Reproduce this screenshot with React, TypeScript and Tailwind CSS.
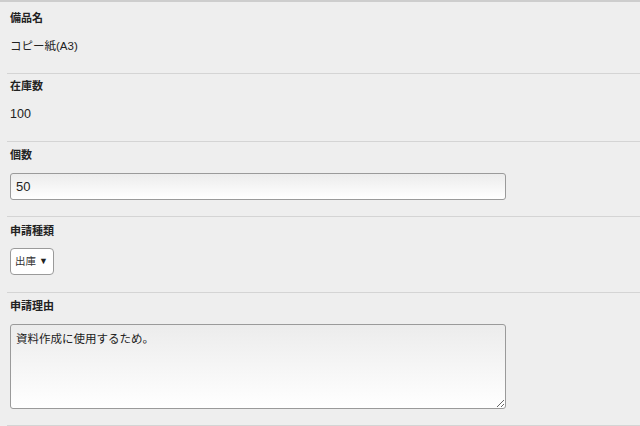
import { useState } from 'react';

const font = { fontFamily: '"Liberation Sans", "Noto Sans CJK JP", sans-serif' };

function Label({ children }: { children: string }) {
  return <div className="h-4 text-[11px] font-bold leading-4 text-[#222]">{children}</div>;
}

export default function App() {
  const [count, setCount] = useState('50');
  const [kind, setKind] = useState('出庫');
  const [reason, setReason] = useState('資料作成に使用するため。');

  return (
    <div className="min-h-[426px] w-[640px] border-t-2 border-[#cdcdcd] bg-[#eeeeee] text-[#222]" style={font}>
      {/* 備品名 */}
      <div className="ml-[7px] border-b border-[#d4d4d4] pb-[19px] pl-[3px] pt-[8px]">
        <Label>備品名</Label>
        <div className="mt-3 h-4 text-[11.5px] leading-4">コピー紙(A3)</div>
      </div>

      {/* 在庫数 */}
      <div className="ml-[7px] border-b border-[#d4d4d4] pb-[19px] pl-[3px] pt-[4px]">
        <Label>在庫数</Label>
        <div className="mt-3 h-4 text-[12.5px] leading-4">100</div>
      </div>

      {/* 個数 */}
      <div className="ml-[7px] border-b border-[#d4d4d4] pb-[16px] pl-[3px] pt-[5px]">
        <Label>個数</Label>
        <input
          value={count}
          onChange={(e) => setCount(e.target.value)}
          className="mt-[10px] block h-[27px] w-[496px] rounded-[3px] border border-[#9a9a9a] bg-gradient-to-b from-[#ececec] to-white px-[5px] text-[13px] text-[#222] outline-none"
        />
      </div>

      {/* 申請種類 */}
      <div className="ml-[7px] border-b border-[#d4d4d4] pb-[17px] pl-[3px] pt-[6px]">
        <Label>申請種類</Label>
        <div className="relative mt-[9px] h-[27px] w-[44px]">
          <select
            value={kind}
            onChange={(e) => setKind(e.target.value)}
            className="block h-[27px] w-[44px] appearance-none rounded-[4px] border border-[#9a9a9a] bg-white pl-[4px] text-[10.5px] text-[#333] outline-none"
          >
            <option>出庫</option>
            <option>入庫</option>
          </select>
          <span className="pointer-events-none absolute right-[6px] top-[9px] text-[9px] leading-[9px] text-[#222]">▼</span>
        </div>
      </div>

      {/* 申請理由 */}
      <div className="ml-[7px] border-b border-[#d4d4d4] pb-[16px] pl-[3px] pt-[5px]">
        <Label>申請理由</Label>
        <textarea
          value={reason}
          onChange={(e) => setReason(e.target.value)}
          className="mt-[10px] block h-[85px] w-[496px] resize rounded-[3px] border border-[#9a9a9a] bg-gradient-to-b from-[#ececec] to-white px-[5px] py-[6px] text-[11.5px] leading-[16px] text-[#222] outline-none"
        />
      </div>
    </div>
  );
}
